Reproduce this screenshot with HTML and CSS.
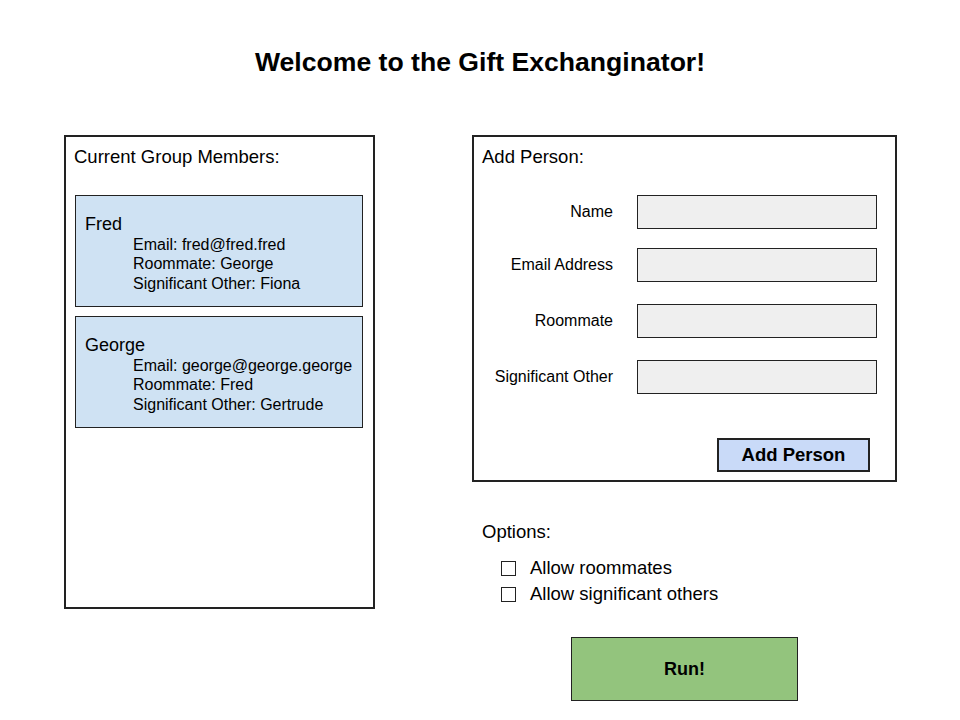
FILE: index.html
```html
<!DOCTYPE html>
<html lang="en">
<head>
    <meta charset="UTF-8">
    <meta name="viewport" content="width=device-width, initial-scale=1.0">
    <title>Gift Exchanginator</title>
    <link rel="stylesheet" href="styles.css">
</head>
<body>
    <h1 class="title">Welcome to the Gift Exchanginator!</h1>

    <div class="main">
        <div class="members">
            <h2 class="panel-title">Current Group Members:</h2>

            <div class="member-card">
                <div class="member-name">Fred</div>
                <div class="member-details">
                    <div>Email: fred@fred.fred</div>
                    <div>Roommate: George</div>
                    <div>Significant Other: Fiona</div>
                </div>
            </div>

            <div class="member-card">
                <div class="member-name">George</div>
                <div class="member-details">
                    <div>Email: george@george.george</div>
                    <div>Roommate: Fred</div>
                    <div>Significant Other: Gertrude</div>
                </div>
            </div>
        </div>

        <div class="side">
            <div class="add-panel">
                <h2 class="panel-title">Add Person:</h2>
                <div class="form">
                    <label class="form-label" for="name">Name</label>
                    <input class="form-input" id="name" type="text">
                    <label class="form-label" for="email">Email Address</label>
                    <input class="form-input" id="email" type="text">
                    <label class="form-label" for="roommate">Roommate</label>
                    <input class="form-input" id="roommate" type="text">
                    <label class="form-label" for="so">Significant Other</label>
                    <input class="form-input" id="so" type="text">
                </div>
                <div class="form-actions">
                    <button class="add-button">Add Person</button>
                </div>
            </div>

            <div class="options">
                <h2 class="panel-title">Options:</h2>
                <label class="option"><input class="check" type="checkbox"> Allow roommates</label>
                <label class="option"><input class="check" type="checkbox"> Allow significant others</label>
            </div>

            <button class="run-button">Run!</button>
        </div>
    </div>
</body>
</html>
```

FILE: styles.css
```css
body {
    margin: 0;
    font-family: "Liberation Sans", Arial, sans-serif;
    color: #000;
    background: #fff;
}
.title {
    margin: 0;
    padding-top: 47px;
    font-size: 26.6px;
    line-height: 30px;
    font-weight: bold;
    text-align: center;
}
.main {
    display: flex;
    align-items: flex-start;
    gap: 97px;
    margin-top: 58px;
    padding-left: 64px;
}
.panel-title {
    margin: 0;
    font-size: 18.5px;
    line-height: 22px;
    font-weight: normal;
}
.members {
    box-sizing: border-box;
    width: 311px;
    height: 474px;
    border: 2px solid #222;
    padding: 9px 10px 0 8px;
}
.members .panel-title {
    margin-bottom: 27px;
}
.member-card {
    background: #cfe2f3;
    border: 1px solid #222;
    padding: 17.5px 9px 13px 9px;
    margin: 0 0 9px 1px;
}
.member-name {
    font-size: 18px;
    line-height: 21px;
}
.member-details {
    margin-left: 48px;
    font-size: 16px;
    line-height: 19.5px;
}
.side {
    width: 425px;
}
.add-panel {
    box-sizing: border-box;
    height: 347px;
    border: 2px solid #222;
    padding: 9px 18px 0 8px;
}
.add-panel .panel-title {
    margin-bottom: 27px;
}
.form {
    display: grid;
    grid-template-columns: 131px 240px;
    grid-template-rows: 53px 56px 56px 34px;
    column-gap: 24px;
    align-items: start;
}
.form-label {
    font-size: 16px;
    line-height: 34px;
    text-align: right;
}
.form-input {
    box-sizing: border-box;
    height: 34px;
    margin: 0;
    border: 1px solid #222;
    background: #efefef;
}
.form-actions {
    display: flex;
    justify-content: flex-end;
    margin-top: 44px;
    padding-right: 7px;
}
.add-button {
    box-sizing: border-box;
    width: 153px;
    height: 34px;
    border: 2px solid #222;
    background: #c9daf8;
    font-family: inherit;
    font-size: 18.5px;
    font-weight: bold;
    color: #000;
    cursor: pointer;
}
.options {
    margin-top: 39px;
    padding-left: 10px;
}
.options .panel-title {
    margin-bottom: 12px;
}
.option {
    display: flex;
    align-items: center;
    height: 26px;
    padding-left: 19px;
    gap: 14px;
    font-size: 18.5px;
}
.check {
    appearance: none;
    box-sizing: border-box;
    width: 15px;
    height: 15px;
    margin: 0;
    border: 1px solid #222;
    background: #fff;
}
.run-button {
    display: block;
    box-sizing: border-box;
    width: 227px;
    height: 64px;
    margin: 30px 0 0 99px;
    border: 1px solid #222;
    background: #93c47d;
    font-family: inherit;
    font-size: 18px;
    font-weight: bold;
    color: #000;
    cursor: pointer;
}
```
